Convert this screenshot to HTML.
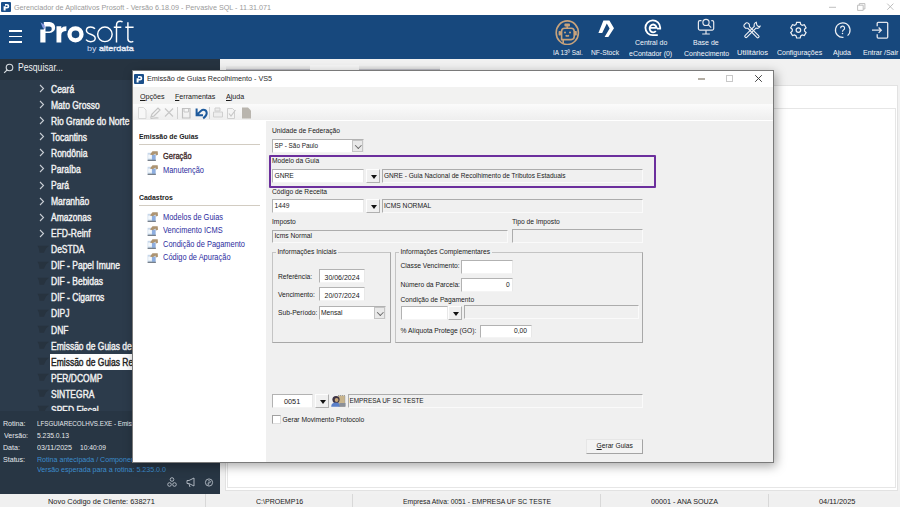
<!DOCTYPE html>
<html><head><meta charset="utf-8">
<style>
*{margin:0;padding:0;box-sizing:border-box}
html,body{width:900px;height:507px;overflow:hidden;background:#f0f0f0;font-family:"Liberation Sans",sans-serif}
body{position:relative}
.a{position:absolute}
.t{position:absolute;white-space:nowrap;line-height:1}
#titlebar{left:0;top:0;width:900px;height:15px;background:#fff}
#header{left:0;top:15px;width:900px;height:44px;background:#17487d}
#sidebar{left:0;top:59px;width:220px;height:435px;background:#2c3b4b}
#search{left:0;top:59px;width:220px;height:21px;background:#263340}
.tree{color:#f2f2f2;font-size:10px;font-weight:normal;-webkit-text-stroke:.4px currentColor;left:51px;transform:scaleX(.85);transform-origin:0 0}
.inf{font-size:7.8px;color:#e6e9ec;transform:scaleX(.91);transform-origin:0 0;margin-top:-.6px}
.chev{left:39px;width:5px;height:5px;border-right:1px solid #cfd4da;border-bottom:1px solid #cfd4da;transform:rotate(-45deg)}
#statusbar{left:0;top:494px;width:900px;height:13px;background:#f0f0f0}
.st{font-size:7.4px;color:#1a1a1a;top:497.8px;transform-origin:0 0}
.sep{top:494px;width:1px;height:13px;background:#d8d8d8}
.hl{color:#f4f6fa;font-size:8px;transform:scaleX(.875);transform-origin:0 0;margin-top:.15px}
.lb{font-size:6.7px;color:#1a1a1a;margin-top:.9px}
.ed{background:#fff;border:1px solid;border-color:#b2b2b2 #e8e8e8 #f4f4f4 #b2b2b2}
.dis{background:#f0f0f0;border:1px solid;border-color:#acacac #fafafa #fafafa #acacac}
.dd{background:#f0f0f0;border:1px solid;border-color:#fdfdfd #b0b0b0 #b0b0b0 #fdfdfd}
.dd::after{content:"";position:absolute;left:3.5px;top:5px;border-left:3.5px solid transparent;border-right:3.5px solid transparent;border-top:4px solid #111}
.cb{background:#e9e9e9;border:1px solid #c4c4c4}
.cb::after{content:"";position:absolute;left:2.6px;top:1.6px;width:3.6px;height:3.6px;border-right:0.9px solid #666;border-bottom:0.9px solid #666;transform:rotate(45deg)}
.gb{border:1px solid #c4c4c4;border-right-color:#a8a8a8;border-bottom-color:#a8a8a8}
</style></head><body>
<!-- title bar -->
<div id="titlebar" class="a"></div>
<svg class="a" style="left:1px;top:2px" width="10" height="10" viewBox="0 0 10 10"><rect width="10" height="10" rx="1" fill="#1b4f8a"/><path fill="#fff" fill-rule="evenodd" d="M4 2H6A2.3 2.3 0 0 1 6 6.6H4.6V8.6H2.6V4.2H4Z M4.6 3.6H5.9A0.75 0.75 0 0 1 5.9 5.1H4.6Z"/></svg>
<div class="t" style="left:14px;top:3.6px;font-size:7.2px;color:#9a9a9a">Gerenciador de Aplicativos Prosoft - Versão 6.18.09 - Pervasive SQL - 11.31.071</div>
<svg class="a" style="left:820px;top:0" width="80" height="15" viewBox="820 0 80 15"><g fill="none" stroke="#b8b8b8" stroke-width="0.9"><path d="M829 7.3h7"/><path d="M857.6 5.2h5.6v5.2h-5.6z M859.3 5.2v-1.6h5.6v5.4h-1.7"/><path d="M887.2 3.6l6.2 6.2M893.4 3.6l-6.2 6.2"/></g></svg>
<!-- header -->
<div id="header" class="a"></div>
<div class="a" style="left:9px;top:30px;width:13px;height:1.5px;background:#fff"></div>
<div class="a" style="left:9px;top:35.5px;width:13px;height:1.5px;background:#fff"></div>
<div class="a" style="left:9px;top:41px;width:13px;height:1.5px;background:#fff"></div>
<svg class="a" style="left:36px;top:16px" width="104" height="40" viewBox="36 16 104 40">
 <path fill="#fff" fill-rule="evenodd" d="M43.8 21.9H49.6A5.55 5.55 0 0 1 49.6 33H45.5V42.4H40.3V29.4H43.8Z M45.5 26.6H49.4A2.4 2.4 0 0 1 49.4 31.4H45.5Z"/>
 <path fill="#8a9be0" d="M40.5 22.3L44.6 25L44.9 29L42.6 27.4Z"/>
 <path fill="#fff" d="M56.5 26.3H61.3V28.2Q62.6 26.3 66.4 26.3V31Q61.3 31 61.3 35.2V42.4H56.5Z"/>
 <circle cx="75.5" cy="34.35" r="6" fill="none" stroke="#fff" stroke-width="4.3"/>
 <g fill="none" stroke="#fff" stroke-width="1.45">
  <path d="M95 28.8C93.8 27.3 92.3 26.9 90.6 26.9C88 26.9 86.4 28.4 86.4 30.5C86.4 35.2 95.2 33.4 95.2 38.3C95.2 40.6 93.2 41.7 90.6 41.7C88.6 41.7 87 41 86 39.6"/>
  <circle cx="104.9" cy="34.35" r="7.25"/>
  <path d="M122.6 21.9C121.8 21.5 121.1 21.3 120.3 21.3C117.9 21.3 116.5 22.7 116.5 25.3V42.4M113.8 27.2H121.3"/>
  <path d="M127.9 22.3V38.8C127.9 41 128.9 41.9 130.8 41.9C131.7 41.9 132.5 41.7 133.3 41.3M125.3 27.2H133.6"/>
 </g>
 <text x="87" y="51.2" font-family="Liberation Sans" font-size="8" fill="#cdd6ee" textLength="46.7" lengthAdjust="spacingAndGlyphs">by <tspan fill="#e8edf8" stroke="#e8edf8" stroke-width="0.35">alterdata</tspan></text>
</svg>

<svg class="a" style="left:540px;top:15px" width="360" height="30" viewBox="540 15 360 30">
 <g fill="none" stroke="#c8a37c" stroke-width="1.6">
  <ellipse cx="567.3" cy="32.7" rx="11.1" ry="11.8"/>
  <path d="M563.2 43.2v-3.6h8a3 3 0 0 0 3-3v-5.3a3 3 0 0 0-3-3h-6.6a3 3 0 0 0-3 3v9.2"/>
  <path d="M567.2 26.2v2.4"/>
  <path d="M565.6 35.3q1.7 1.3 3.4 0"/>
 </g>
 <g fill="#c8a37c"><rect x="564.4" y="23.6" width="5.6" height="2.8" rx="0.9"/><circle cx="565" cy="32.4" r="1"/><circle cx="570" cy="32.4" r="1"/><rect x="558.6" y="31" width="2.4" height="4.6" rx="0.8"/><rect x="574.4" y="31" width="2.4" height="4.6" rx="0.8"/></g>
 <path d="M603.4 20.4L609.4 20.4L614 28.3L608.3 37L604.6 37L609.6 28.6L606.8 23.6L602.2 32.9L598.4 32.9Z" fill="#fff"/>
 <g fill="none" stroke="#fff" stroke-width="1.8">
  <path d="M657.8 35.2H652.8A7.4 7.4 0 1 1 660.2 27.6V28.6H657"/>
  <path d="M649.8 27.9H656.6A3.5 3.9 0 1 0 655.8 31" stroke-width="1.9"/>
 </g>
 <g fill="none" stroke="#e6e8ee" stroke-width="1.2">
  <path d="M701.5 20.6h-1.6a1.5 1.5 0 0 0-1.5 1.5v6.5a1.5 1.5 0 0 0 1.5 1.5h12.3a1.5 1.5 0 0 0 1.5-1.5v-6.5a1.5 1.5 0 0 0-1.5-1.5h-0.9"/>
  <circle cx="706" cy="22.4" r="3.1"/><path d="M708.2 24.6l3 3"/>
  <path d="M706 30.2v3.6M702.2 34h7.6"/>
 </g>
 <g fill="none" stroke="#eef0f4" stroke-width="1.1">
  <path d="M745.5 23.5a1.8 1.8 0 0 1 2.6-0.4l1.2 1.2l0.2 2.4l9.3 9.2a0.8 0.8 0 0 1 0 1.2l-0.5 0.5a0.8 0.8 0 0 1-1.2 0l-9.2-9.3l-2.4-0.2l-1.2-1.2a1.8 1.8 0 0 1 0.4-2.6z"/>
  <path d="M756.3 22.2a3.2 3.2 0 0 0-2 4.2l-9.3 9.3a0.8 0.8 0 0 0 0 1.2l0.5 0.5a0.8 0.8 0 0 0 1.2 0l9.3-9.3a3.2 3.2 0 0 0 4.2-2l-2 0.4l-1.4-1.4z"/>
 </g>
 <g fill="none" stroke="#eef0f4" stroke-width="1.2">
  <path d="M796.6 22.3h3.6l0.5 2.1l1.5 0.9l2.1-0.6l1.8 3.1l-1.6 1.5v1.7l1.6 1.5l-1.8 3.1l-2.1-0.6l-1.5 0.9l-0.5 2.1h-3.6l-0.5-2.1l-1.5-0.9l-2.1 0.6l-1.8-3.1l1.6-1.5v-1.7l-1.6-1.5l1.8-3.1l2.1 0.6l1.5-0.9z"/>
  <circle cx="798.4" cy="30.1" r="2.3"/>
 </g>
 <g fill="none" stroke="#eef0f4" stroke-width="1.2">
  <path d="M847.6 35.6A7.3 7.3 0 1 0 843.5 37.4"/>
  <path d="M840.6 28.2a2 2 0 1 1 2.8 1.8c-0.8 0.4-0.9 0.9-0.9 1.8"/>
 </g>
 <circle cx="842.5" cy="33.6" r="0.75" fill="#eef0f4"/>
 <g fill="none" stroke="#e4e6ec" stroke-width="1.3">
  <path d="M877.2 26.2v-2.9a1 1 0 0 1 1-1h8.5a1 1 0 0 1 1 1v13.8a1 1 0 0 1-1 1h-8.5a1 1 0 0 1-1-1v-2.9"/>
  <path d="M872 30.2h9.3M878.6 27.5l2.7 2.7l-2.7 2.7"/>
 </g>
</svg>
<div class="t hl" style="left:553px;top:49px;transform:scaleX(.8)">IA 13º Sal.</div>
<div class="t hl" style="left:591px;top:49px;transform:scaleX(.84)">NF-Stock</div>
<div class="t hl" style="left:635px;top:39px">Central do</div>
<div class="t hl" style="left:629px;top:50px">eContador (0)</div>
<div class="t hl" style="left:693px;top:39px">Base de</div>
<div class="t hl" style="left:684px;top:50px">Conhecimento</div>
<div class="t hl" style="left:736.6px;top:49px;transform:scaleX(.945)">Utilitários</div>
<div class="t hl" style="left:777px;top:49px">Configurações</div>
<div class="t hl" style="left:833px;top:49px">Ajuda</div>
<div class="t hl" style="left:863px;top:49px">Entrar /Sair</div>

<!-- main bg -->
<div class="a" style="left:220px;top:59px;width:680px;height:435px;background:#f1f1f1"></div>
<div class="a" style="left:226px;top:65.5px;width:214px;height:4px;background:linear-gradient(#ececec,#e0e0e0);border-bottom:1px solid #bcbcc4"></div>
<div class="a" style="left:310px;top:65px;width:49px;height:5px;background:#f6f6f6"></div>
<div class="a" style="left:224.5px;top:84.5px;width:673px;height:406.5px;background:#fff;border:1px solid #e2e2e2"></div>
<div class="a" style="left:227px;top:108px;width:669px;height:379.5px;background:#fff;border:1px solid #e6e6e6"></div>
<!-- sidebar -->
<div id="sidebar" class="a"></div>
<div id="search" class="a"></div>
<svg class="a" style="left:3px;top:63px" width="11" height="11"><circle cx="6.5" cy="4.5" r="3.3" fill="none" stroke="#d8dde2" stroke-width="1.1"/><path d="M4.2 6.8L1.2 9.8" stroke="#d8dde2" stroke-width="1.2"/></svg>
<div class="t" style="left:18px;top:63.1px;font-size:10px;color:#eef0f2;transform:scaleX(.86);transform-origin:0 0">Pesquisar...</div>
<svg class="a" style="left:39px;top:84.2px" width="6" height="9"><path d="M1 1l3.5 3.5L1 8" fill="none" stroke="#c9ced4" stroke-width="1.1"/></svg>
<div class="t tree" style="top:84.7px">Ceará</div>
<svg class="a" style="left:39px;top:100.2px" width="6" height="9"><path d="M1 1l3.5 3.5L1 8" fill="none" stroke="#c9ced4" stroke-width="1.1"/></svg>
<div class="t tree" style="top:100.7px">Mato Grosso</div>
<svg class="a" style="left:39px;top:116.3px" width="6" height="9"><path d="M1 1l3.5 3.5L1 8" fill="none" stroke="#c9ced4" stroke-width="1.1"/></svg>
<div class="t tree" style="top:116.9px">Rio Grande do Norte</div>
<svg class="a" style="left:39px;top:132.4px" width="6" height="9"><path d="M1 1l3.5 3.5L1 8" fill="none" stroke="#c9ced4" stroke-width="1.1"/></svg>
<div class="t tree" style="top:133.0px">Tocantins</div>
<svg class="a" style="left:39px;top:148.4px" width="6" height="9"><path d="M1 1l3.5 3.5L1 8" fill="none" stroke="#c9ced4" stroke-width="1.1"/></svg>
<div class="t tree" style="top:149.0px">Rondônia</div>
<svg class="a" style="left:39px;top:164.4px" width="6" height="9"><path d="M1 1l3.5 3.5L1 8" fill="none" stroke="#c9ced4" stroke-width="1.1"/></svg>
<div class="t tree" style="top:165.0px">Paraíba</div>
<svg class="a" style="left:39px;top:180.5px" width="6" height="9"><path d="M1 1l3.5 3.5L1 8" fill="none" stroke="#c9ced4" stroke-width="1.1"/></svg>
<div class="t tree" style="top:181.1px">Pará</div>
<svg class="a" style="left:39px;top:196.6px" width="6" height="9"><path d="M1 1l3.5 3.5L1 8" fill="none" stroke="#c9ced4" stroke-width="1.1"/></svg>
<div class="t tree" style="top:197.2px">Maranhão</div>
<svg class="a" style="left:39px;top:212.6px" width="6" height="9"><path d="M1 1l3.5 3.5L1 8" fill="none" stroke="#c9ced4" stroke-width="1.1"/></svg>
<div class="t tree" style="top:213.2px">Amazonas</div>
<svg class="a" style="left:39px;top:228.7px" width="6" height="9"><path d="M1 1l3.5 3.5L1 8" fill="none" stroke="#c9ced4" stroke-width="1.1"/></svg>
<div class="t tree" style="top:229.3px">EFD-Reinf</div>
<svg class="a" style="left:36px;top:244.7px" width="14" height="9"><path d="M1.5 0.8H13L10 3.5L8 7.8H3.5L2.8 3.5Z" fill="#27333f"/></svg>
<div class="t tree" style="top:245.3px">DeSTDA</div>
<svg class="a" style="left:36px;top:260.7px" width="14" height="9"><path d="M1.5 0.8H13L10 3.5L8 7.8H3.5L2.8 3.5Z" fill="#27333f"/></svg>
<div class="t tree" style="top:261.3px">DIF - Papel Imune</div>
<svg class="a" style="left:36px;top:276.8px" width="14" height="9"><path d="M1.5 0.8H13L10 3.5L8 7.8H3.5L2.8 3.5Z" fill="#27333f"/></svg>
<div class="t tree" style="top:277.3px">DIF - Bebidas</div>
<svg class="a" style="left:36px;top:292.9px" width="14" height="9"><path d="M1.5 0.8H13L10 3.5L8 7.8H3.5L2.8 3.5Z" fill="#27333f"/></svg>
<div class="t tree" style="top:293.4px">DIF - Cigarros</div>
<svg class="a" style="left:36px;top:308.9px" width="14" height="9"><path d="M1.5 0.8H13L10 3.5L8 7.8H3.5L2.8 3.5Z" fill="#27333f"/></svg>
<div class="t tree" style="top:309.4px">DIPJ</div>
<svg class="a" style="left:36px;top:324.9px" width="14" height="9"><path d="M1.5 0.8H13L10 3.5L8 7.8H3.5L2.8 3.5Z" fill="#27333f"/></svg>
<div class="t tree" style="top:325.5px">DNF</div>
<svg class="a" style="left:36px;top:341.0px" width="14" height="9"><path d="M1.5 0.8H13L10 3.5L8 7.8H3.5L2.8 3.5Z" fill="#27333f"/></svg>
<div class="t tree" style="top:341.5px">Emissão de Guias de</div>
<svg class="a" style="left:36px;top:357.1px" width="14" height="9"><path d="M1.5 0.8H13L10 3.5L8 7.8H3.5L2.8 3.5Z" fill="#27333f"/></svg>
<div class="a" style="left:50px;top:354.1px;width:82px;height:15.5px;background:#fdfdfd"></div>
<div class="t tree" style="top:357.6px;color:#1e1e1e">Emissão de Guias Recolhimento</div>
<svg class="a" style="left:36px;top:373.1px" width="14" height="9"><path d="M1.5 0.8H13L10 3.5L8 7.8H3.5L2.8 3.5Z" fill="#27333f"/></svg>
<div class="t tree" style="top:373.6px">PER/DCOMP</div>
<svg class="a" style="left:36px;top:389.1px" width="14" height="9"><path d="M1.5 0.8H13L10 3.5L8 7.8H3.5L2.8 3.5Z" fill="#27333f"/></svg>
<div class="t tree" style="top:389.7px">SINTEGRA</div>
<svg class="a" style="left:36px;top:405.2px" width="14" height="9"><path d="M1.5 0.8H13L10 3.5L8 7.8H3.5L2.8 3.5Z" fill="#27333f"/></svg>
<div class="t tree" style="top:405.7px">SPED Fiscal</div>
<!-- info panel -->
<div class="a" style="left:0;top:411px;width:220px;height:83px;background:#283644"></div>
<div class="t inf" style="left:3px;top:420.9px">Rotina:</div>
<div class="t inf" style="left:37px;top:420.9px;transform:scaleX(.80);transform-origin:0 0">LFSGUIARECOLHVS.EXE - Emissão de Guias Recolhimento</div>
<div class="t inf" style="left:4px;top:432.6px">Versão:</div>
<div class="t inf" style="left:37px;top:432.6px;transform:scaleX(.865);transform-origin:0 0">5.235.0.13</div>
<div class="t inf" style="left:3px;top:444.6px">Data:</div>
<div class="t inf" style="left:37px;top:444.6px">03/11/2025</div><div class="t inf" style="left:80.4px;top:444.6px;transform:scaleX(.855);transform-origin:0 0">10:40:09</div>
<div class="t inf" style="left:3px;top:456.6px">Status:</div>
<div class="t inf" style="left:37px;top:456.6px;color:#3c8ccc">Rotina antecipada / Componente</div>
<div class="t inf" style="left:37px;top:467.0px;color:#3c8ccc">Versão esperada para a rotina: 5.235.0.0</div>
<svg class="a" style="left:167px;top:477px" width="48" height="11"><g fill="none" stroke="#b8c0c8" stroke-width="0.9"><circle cx="5" cy="2.5" r="1.8"/><circle cx="2.5" cy="7.5" r="1.8"/><circle cx="7.5" cy="7.5" r="1.8"/><path d="M20 3.5h2l5-2.5v8l-5-2.5h-2z M22 7l1 3"/><circle cx="42" cy="5.5" r="3.6"/><path d="M41.2 3.8h1.2a1 1 0 0 1 0 2h-1.2v2.5"/></g></svg>
<!-- status bar -->
<div id="statusbar" class="a"></div>
<div class="t st" style="left:48px">Novo Código de Cliente: 638271</div>
<div class="a sep" style="left:205px"></div>
<div class="t st" style="left:256px;transform:scaleX(.95)">C:\PROEMP16</div>
<div class="a sep" style="left:352px"></div>
<div class="t st" style="left:403px;transform:scaleX(.922)">Empresa Ativa: 0051 - EMPRESA UF SC TESTE</div>
<div class="a sep" style="left:600px"></div>
<div class="t st" style="left:651px;transform:scaleX(.97)">00001 - ANA SOUZA</div>
<div class="a sep" style="left:768px"></div>
<div class="t st" style="left:819px">04/11/2025</div>

<!-- dialog -->
<div class="a" style="left:132px;top:70px;width:642px;height:393px;background:#f0f0f0;border:1px solid #7a7a7a;box-shadow:2px 3px 10px rgba(0,0,0,.35)"></div>
<div class="a" style="left:133px;top:71px;width:640px;height:16px;background:#fff"></div>
<svg class="a" style="left:134px;top:73.5px" width="10" height="10" viewBox="0 0 10 10"><rect width="10" height="10" rx="1" fill="#1b4f8a"/><path fill="#fff" fill-rule="evenodd" d="M4 2H6A2.3 2.3 0 0 1 6 6.6H4.6V8.6H2.6V4.2H4Z M4.6 3.6H5.9A0.75 0.75 0 0 1 5.9 5.1H4.6Z"/></svg>
<div class="t" style="left:147px;top:74.6px;font-size:8px;color:#2a2a2a;transform:scaleX(.905);transform-origin:0 0">Emissão de Guias Recolhimento - VS5</div>
<div class="a" style="left:698px;top:78.2px;width:6.5px;height:1.4px;background:#b4aea4"></div>
<div class="a" style="left:726px;top:75px;width:7px;height:7px;border:1px solid #c8c8c8"></div>
<svg class="a" style="left:754px;top:74px" width="9" height="9"><path d="M1.2 1.2L7.8 7.8M7.8 1.2L1.2 7.8" stroke="#3a3a3a" stroke-width="0.95"/></svg>
<!-- menu -->
<div class="a" style="left:133px;top:87px;width:640px;height:17px;background:#f2f2f1"></div>
<div class="t" style="left:140px;top:93.1px;font-size:8px;color:#1a1a1a;transform:scaleX(.89);transform-origin:0 0"><u>O</u>pções</div>
<div class="t" style="left:175px;top:93.1px;font-size:8px;color:#1a1a1a;transform:scaleX(.89);transform-origin:0 0"><u>F</u>erramentas</div>
<div class="t" style="left:226px;top:93.1px;font-size:8px;color:#1a1a1a;transform:scaleX(.89);transform-origin:0 0"><u>A</u>juda</div>
<!-- toolbar -->
<div class="a" style="left:133px;top:104px;width:640px;height:17px;background:linear-gradient(#fbfbfb,#eeeeee);border-bottom:1px solid #fff"></div>
<svg class="a" style="left:133px;top:104px" width="125" height="17">
 <path d="M5.5 3.5h5l2.5 2.5v8.5h-7.5z" fill="#f7f7f7" stroke="#d8d8d8"/>
 <path d="M18 13l1-3 6-6 2 2-6 6z M17.5 14.5c2 0 4 -1 8 -0.5" fill="none" stroke="#c4c4c4" stroke-width="1.2"/>
 <path d="M32 4.5l8 8M40 4.5l-8 8" stroke="#c8c8c8" stroke-width="1.2"/>
 <path d="M44.5 3v12" stroke="#d0d0d0"/>
 <path d="M49.5 4.5h7.5v9.5h-7.5z" fill="none" stroke="#c0c0c0" stroke-width="1.2"/><path d="M51 5v3h4.5v-3" fill="none" stroke="#c8c8c8"/>
 <path d="M63.6 4.6V11.2H70M64 10.8L67.9 6.9C70.2 4.9 73.7 5.8 73.7 9.3C73.7 11.6 72 13 70.2 14.4" fill="none" stroke="#1e5a9c" stroke-width="2"/>
 <path d="M76.5 3v12" stroke="#d0d0d0"/>
 <path d="M82 4h5v3h-5z M80.5 8h9v5h-9z" fill="#eeeeee" stroke="#cfcfcf"/>
 <path d="M94.5 4.5h5l2 2v8h-7z" fill="#f4f4f4" stroke="#d0d0d0"/><path d="M96 9.5l2 2.5 4.5-6" fill="none" stroke="#c8c8c8" stroke-width="1.2"/>
 <path d="M109 3.5h6l3 3v8h-9z" fill="#b9b5ae"/>
</svg>
<!-- left panel -->
<div class="a" style="left:133px;top:121px;width:133px;height:341px;background:#fff"></div>
<div class="t" style="left:139px;top:132.65px;font-size:7.3px;font-weight:bold;transform:scaleX(.945);transform-origin:0 0;color:#222">Emissão de Guias</div>
<div class="a" style="left:139px;top:143.5px;width:121px;height:1px;background:#d2ccc2"></div>
<svg class="a" style="left:147px;top:151.0px" width="12" height="10" viewBox="0 0 12 10"><rect x="0.6" y="1.8" width="8.3" height="7.5" fill="#c8d8ea"/><rect x="1.2" y="3.6" width="3.6" height="4" fill="#f4f8fc"/><rect x="5" y="4" width="3.4" height="4.8" fill="#8eaee0"/><path d="M0.6 9.3h8.3" stroke="#4a5260" stroke-width="0.9"/><path d="M3 3.5L5.5 0.3h5.2l0.3 3.5l-2 0.8L8.5 2.6L5.8 4.2z" fill="#ad9472"/></svg>
<svg class="a" style="left:147px;top:165.3px" width="12" height="10" viewBox="0 0 12 10"><rect x="0.6" y="1.8" width="8.3" height="7.5" fill="#c8d8ea"/><rect x="1.2" y="3.6" width="3.6" height="4" fill="#f4f8fc"/><rect x="5" y="4" width="3.4" height="4.8" fill="#8eaee0"/><path d="M0.6 9.3h8.3" stroke="#4a5260" stroke-width="0.9"/><path d="M3 3.5L5.5 0.3h5.2l0.3 3.5l-2 0.8L8.5 2.6L5.8 4.2z" fill="#ad9472"/></svg>
<svg class="a" style="left:147px;top:212.3px" width="12" height="10" viewBox="0 0 12 10"><rect x="0.6" y="1.8" width="8.3" height="7.5" fill="#c8d8ea"/><rect x="1.2" y="3.6" width="3.6" height="4" fill="#f4f8fc"/><rect x="5" y="4" width="3.4" height="4.8" fill="#8eaee0"/><path d="M0.6 9.3h8.3" stroke="#4a5260" stroke-width="0.9"/><path d="M3 3.5L5.5 0.3h5.2l0.3 3.5l-2 0.8L8.5 2.6L5.8 4.2z" fill="#ad9472"/></svg>
<svg class="a" style="left:147px;top:225.8px" width="12" height="10" viewBox="0 0 12 10"><rect x="0.6" y="1.8" width="8.3" height="7.5" fill="#c8d8ea"/><rect x="1.2" y="3.6" width="3.6" height="4" fill="#f4f8fc"/><rect x="5" y="4" width="3.4" height="4.8" fill="#8eaee0"/><path d="M0.6 9.3h8.3" stroke="#4a5260" stroke-width="0.9"/><path d="M3 3.5L5.5 0.3h5.2l0.3 3.5l-2 0.8L8.5 2.6L5.8 4.2z" fill="#ad9472"/></svg>
<svg class="a" style="left:147px;top:239.3px" width="12" height="10" viewBox="0 0 12 10"><rect x="0.6" y="1.8" width="8.3" height="7.5" fill="#c8d8ea"/><rect x="1.2" y="3.6" width="3.6" height="4" fill="#f4f8fc"/><rect x="5" y="4" width="3.4" height="4.8" fill="#8eaee0"/><path d="M0.6 9.3h8.3" stroke="#4a5260" stroke-width="0.9"/><path d="M3 3.5L5.5 0.3h5.2l0.3 3.5l-2 0.8L8.5 2.6L5.8 4.2z" fill="#ad9472"/></svg>
<svg class="a" style="left:147px;top:252.8px" width="12" height="10" viewBox="0 0 12 10"><rect x="0.6" y="1.8" width="8.3" height="7.5" fill="#c8d8ea"/><rect x="1.2" y="3.6" width="3.6" height="4" fill="#f4f8fc"/><rect x="5" y="4" width="3.4" height="4.8" fill="#8eaee0"/><path d="M0.6 9.3h8.3" stroke="#4a5260" stroke-width="0.9"/><path d="M3 3.5L5.5 0.3h5.2l0.3 3.5l-2 0.8L8.5 2.6L5.8 4.2z" fill="#ad9472"/></svg>
<div class="t" style="left:163px;top:152.64px;font-size:8.2px;transform:scaleX(.91);transform-origin:0 0;color:#3a2424;-webkit-text-stroke:0.3px #3a2424">Geração</div>
<div class="t" style="left:163px;top:166.84px;font-size:8.2px;transform:scaleX(.91);transform-origin:0 0;color:#2c2c9e">Manutenção</div>
<div class="t" style="left:139px;top:193.75px;font-size:7.3px;font-weight:bold;transform:scaleX(.945);transform-origin:0 0;color:#222">Cadastros</div>
<div class="a" style="left:139px;top:204.5px;width:121px;height:1px;background:#d2ccc2"></div>
<div class="t" style="left:163px;top:213.84px;font-size:8.2px;transform:scaleX(.91);transform-origin:0 0;color:#2c2c9e">Modelos de Guias</div>
<div class="t" style="left:163px;top:227.34px;font-size:8.2px;transform:scaleX(.91);transform-origin:0 0;color:#2c2c9e">Vencimento ICMS</div>
<div class="t" style="left:163px;top:240.84px;font-size:8.2px;transform:scaleX(.91);transform-origin:0 0;color:#2c2c9e">Condição de Pagamento</div>
<div class="t" style="left:163px;top:254.34px;font-size:8.2px;transform:scaleX(.91);transform-origin:0 0;color:#2c2c9e">Código de Apuração</div>
<!-- form -->
<div class="t lb" style="left:272px;top:127.5px">Unidade de Federação</div>
<div class="a ed" style="left:272px;top:139px;width:92px;height:14px"></div>
<div class="t lb" style="left:274.5px;top:142.5px;font-size:6.4px">SP - São Paulo</div>
<div class="a cb" style="left:352px;top:140px;width:11px;height:12px"></div>
<div class="a" style="left:269px;top:155px;width:387px;height:33px;border:2px solid #6c2f9d;border-radius:1px"></div>
<div class="t lb" style="left:272px;top:157.5px">Modelo da Guia</div>
<div class="a ed" style="left:272px;top:169px;width:92px;height:14px"></div>
<div class="t lb" style="left:274.5px;top:172.5px">GNRE</div>
<div class="a dd" style="left:366px;top:169px;width:14px;height:14px"></div>
<div class="a dis" style="left:382px;top:169px;width:261px;height:14px"></div>
<div class="t lb" style="left:384px;top:172.5px;font-size:6.55px">GNRE - Guia Nacional de Recolhimento de Tributos Estaduais</div>
<div class="t lb" style="left:272px;top:188px">Código de Receita</div>
<div class="a ed" style="left:272px;top:199px;width:92px;height:14px"></div>
<div class="t lb" style="left:274.5px;top:202.5px">1449</div>
<div class="a dd" style="left:366px;top:199px;width:14px;height:14px"></div>
<div class="a dis" style="left:382px;top:199px;width:261px;height:14px"></div>
<div class="t lb" style="left:384px;top:202.5px">ICMS NORMAL</div>
<div class="t lb" style="left:272px;top:218.5px">Imposto</div>
<div class="a dis" style="left:272px;top:229.5px;width:236px;height:13px"></div>
<div class="t lb" style="left:274.5px;top:232.5px">Icms Normal</div>
<div class="t lb" style="left:512px;top:218.5px">Tipo de Imposto</div>
<div class="a dis" style="left:512px;top:229px;width:131px;height:14px"></div>

<!-- group 1 -->
<div class="a gb" style="left:272px;top:252px;width:119px;height:91px"></div>
<div class="t lb" style="left:276px;top:248.5px;background:#f0f0f0;padding:0 1.5px">Informações Iniciais</div>
<div class="t lb" style="left:278px;top:273.5px">Referência:</div>
<div class="a ed" style="left:319px;top:269px;width:46px;height:14px"></div>
<div class="t lb" style="left:324.5px;top:273px;font-size:7px">30/06/2024</div>
<div class="t lb" style="left:278px;top:291px">Vencimento:</div>
<div class="a ed" style="left:319px;top:287px;width:46px;height:14px"></div>
<div class="t lb" style="left:324.5px;top:291px;font-size:7px">20/07/2024</div>
<div class="t lb" style="left:278px;top:309px">Sub-Período:</div>
<div class="a ed" style="left:319px;top:306px;width:67px;height:14px"></div>
<div class="t lb" style="left:321px;top:309.5px">Mensal</div>
<div class="a cb" style="left:374px;top:307px;width:11px;height:12px"></div>

<!-- group 2 -->
<div class="a gb" style="left:395px;top:252px;width:248px;height:91px"></div>
<div class="t lb" style="left:399px;top:248.5px;background:#f0f0f0;padding:0 1.5px">Informações Complementares</div>
<div class="t lb" style="left:400.5px;top:262.5px">Classe Vencimento:</div>
<div class="a ed" style="left:461px;top:260px;width:52px;height:14px"></div>
<div class="t lb" style="left:400.5px;top:281px">Número da Parcela:</div>
<div class="a ed" style="left:461px;top:278px;width:52px;height:14px"></div>
<div class="t lb" style="left:506px;top:281.5px">0</div>
<div class="t lb" style="left:400.5px;top:296.5px">Condição de Pagamento</div>
<div class="a ed" style="left:400.5px;top:306px;width:47px;height:14px"></div>
<div class="a dd" style="left:448px;top:306px;width:14px;height:14px"></div>
<div class="a dis" style="left:464px;top:305px;width:175px;height:14px"></div>
<div class="t lb" style="left:400.5px;top:327px">% Alíquota Protege (GO):</div>
<div class="a ed" style="left:480px;top:324.5px;width:52px;height:13.5px"></div>
<div class="t lb" style="left:514px;top:327.5px">0,00</div>

<!-- bottom -->
<div class="a ed" style="left:272px;top:394px;width:40.5px;height:14px"></div>
<div class="t lb" style="left:284px;top:397.3px;font-size:7.3px">0051</div>
<div class="a dd" style="left:315px;top:394px;width:13.5px;height:14px"></div>
<svg class="a" style="left:330px;top:394px" width="17" height="14">
 <rect x="8" y="1.5" width="7" height="11" fill="#c8b48c"/>
 <path d="M8 1.5h7v11" fill="none" stroke="#7d8696" stroke-width="0.7" stroke-dasharray="1 1"/>
 <circle cx="6" cy="5.6" r="3.6" fill="#3e3444"/>
 <circle cx="6.6" cy="6" r="1.9" fill="#c9a77a"/>
 <path d="M1.2 12.8c0-3 1.8-4.2 4.6-4.2s4.4 1.2 4.4 4.2z" fill="#5a7fc8"/>
 <rect x="9.5" y="9" width="6" height="3.8" fill="#8a8f98"/>
</svg>
<div class="a dis" style="left:348px;top:394px;width:295px;height:14px"></div>
<div class="t lb" style="left:349.5px;top:397.5px;font-size:6.4px">EMPRESA UF SC TESTE</div>
<div class="a ed" style="left:272px;top:414.5px;width:9px;height:9px;border-color:#a0a0a0 #ddd #ddd #a0a0a0"></div>
<div class="t lb" style="left:282.5px;top:415.8px">Gerar Movimento Protocolo</div>
<div class="a" style="left:586px;top:438.5px;width:57px;height:15px;background:#f3f3f3;border:1px solid;border-color:#e6e6e6 #a4a4a4 #a4a4a4 #e6e6e6"></div>
<div class="t lb" style="left:596.5px;top:442px"><u>G</u>erar Guias</div>
</body></html>
